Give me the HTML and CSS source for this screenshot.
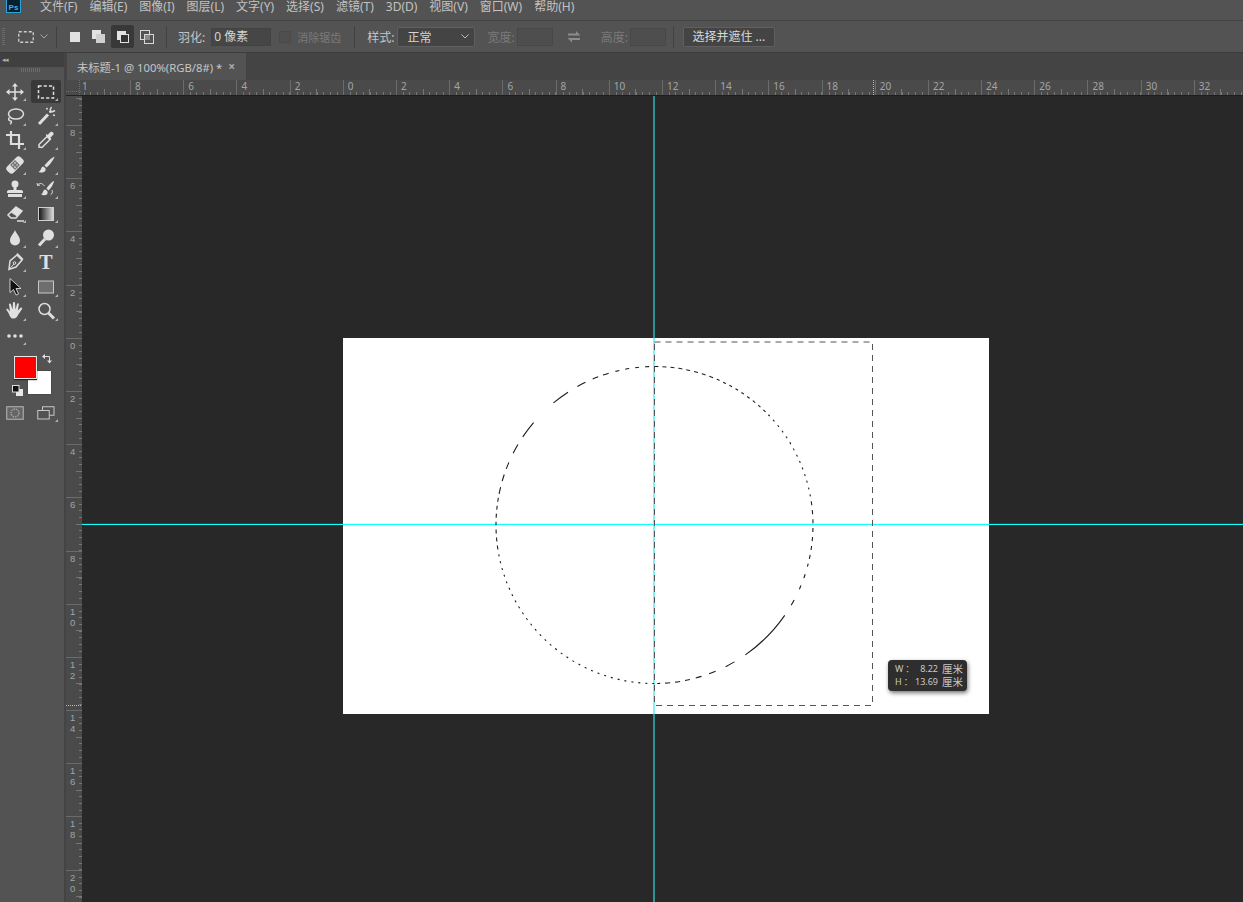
FILE: index.html
```html
<!DOCTYPE html>
<html lang="zh-CN">
<head>
<meta charset="utf-8">
<title>Photoshop</title>
<link rel="stylesheet" href="styles.css">
</head>
<body>
<div class="app">
  <header class="menubar">
    <svg class="ps-logo" viewBox="0 0 15 13" width="15" height="13"><rect x="0.5" y="-2" width="14" height="14.5" fill="#06202f" stroke="#2aa3d8"/><text x="2.6" y="9.6" class="ps-text">Ps</text></svg>
    <nav class="menu">
      <span>文件(F)</span><span>编辑(E)</span><span>图像(I)</span><span>图层(L)</span><span>文字(Y)</span><span>选择(S)</span><span>滤镜(T)</span><span>3D(D)</span><span>视图(V)</span><span>窗口(W)</span><span>帮助(H)</span>
    </nav>
  </header>

  <section class="options">
    <span class="grip"></span>
    <svg class="opt-tool" viewBox="0 0 16 12" width="16" height="12"><rect x="0.75" y="0.75" width="14.5" height="10.5" fill="none" stroke="#cfcfcf" stroke-width="1.3" stroke-dasharray="3 2"/></svg>
    <svg class="opt-chevron" viewBox="0 0 8 5" width="8" height="5"><path d="M.5.5 4 4 7.500.5" fill="none" stroke="#a8a8a8"/></svg>
    <span class="sep sep-a"></span>
    <button class="mode mode-first"><svg viewBox="0 0 14 14" width="14" height="14"><rect x="2" y="2" width="10" height="10" fill="#e2e2e2"/></svg></button>
    <button class="mode"><svg viewBox="0 0 14 14" width="14" height="14"><rect x="0" y="0" width="9" height="9" fill="#e2e2e2"/><rect x="4" y="4" width="9" height="9" fill="#cfcfcf"/></svg></button>
    <button class="mode mode-on"><svg viewBox="0 0 14 14" width="14" height="14"><rect x="1" y="1" width="9" height="9" fill="#e2e2e2"/><rect x="4.500" y="4.500" width="8" height="8" fill="#333" stroke="#e2e2e2"/></svg></button>
    <button class="mode"><svg viewBox="0 0 14 14" width="14" height="14"><rect x="0.500" y="0.500" width="9" height="9" fill="none" stroke="#d8d8d8"/><rect x="4" y="4" width="6" height="6" fill="#8b8b8b"/><rect x="4.500" y="4.500" width="9" height="9" fill="none" stroke="#d8d8d8"/></svg></button>
    <span class="sep sep-b"></span>
    <label class="opt-label feather-label">羽化:</label>
    <span class="field feather">0 像素</span>
    <span class="check"></span>
    <span class="opt-label dim antialias">消除锯齿</span>
    <span class="sep sep-c"></span>
    <label class="opt-label style-label">样式:</label>
    <span class="select">正常<svg viewBox="0 0 8 5" width="8" height="5"><path d="M.5.5 4 4 7.500.5" fill="none" stroke="#b8b8b8"/></svg></span>
    <span class="opt-label dim width-label">宽度:</span>
    <span class="field small"></span>
    <svg class="swap" viewBox="0 0 14 12" width="14" height="12"><path d="M1 2.500h8V0l4.500 4.500H1zM13 7H.500L5 11.500V9h8z" fill="#8c8c8c"/></svg>
    <span class="opt-label dim height-label">高度:</span>
    <span class="field small"></span>
    <span class="sep sep-d"></span>
    <button class="refine">选择并遮住 ...</button>
  </section>

  <div class="workspace">
    <aside class="toolbar">
      <div class="toolbar-head">◂◂</div>
      <div class="toolbar-grip"></div>
      <div class="tools">
        <span class="tool"><svg viewBox="0 0 20 20"><path d="M10 3v14M3 10h14" class="s"/><path d="M10 1l3 3.500H7zM10 19l3-3.500H7zM1 10l3.500-3v6zM19 10l-3.500-3v6z" class="f"/></svg></span>
        <span class="tool active"><svg viewBox="0 0 20 20"><rect x="2.500" y="4" width="15" height="12" class="s" stroke-dasharray="3.200 2"/></svg></span>

        <span class="tool"><svg viewBox="0 0 20 20"><ellipse cx="11" cy="8" rx="7.500" ry="5" class="s"/><path d="M4.500 11.500C3 13 3.500 15 6 15c1 1.200 0 2.500-1 3" class="s"/></svg></span>
        <span class="tool"><svg viewBox="0 0 20 20"><path d="M3 18 12 8.500" class="s thick"/><path d="M14 4l1.500-3M16 6l3-1.500M11.500 3.500 10.500 2M17 9l2 .5" class="s"/><circle cx="14.500" cy="5.500" r="1.500" class="f"/></svg></span>

        <span class="tool"><svg viewBox="0 0 20 20"><path d="M6 1v13h13M1 5h13v14" class="s thick2"/></svg></span>
        <span class="tool"><svg viewBox="0 0 20 20"><path d="M3 17l0-2.500 8-8 3 3-8 8z" class="s"/><path d="M10 5.500l4.500 4.500 1-1-1.200-1.200 3-3c1.200-1.500-1.300-4-2.800-2.800l-3 3L10.300 3.800z" class="f"/></svg></span>

        <span class="tool"><svg viewBox="0 0 20 20"><g transform="rotate(-45 10 10)"><rect x="0.500" y="5.500" width="19" height="9" rx="3" class="f"/><rect x="6.500" y="6.500" width="7" height="7" fill="#777"/><circle cx="8.500" cy="8.500" r=".8" class="f"/><circle cx="11.500" cy="8.500" r=".8" class="f"/><circle cx="8.500" cy="11.500" r=".8" class="f"/><circle cx="11.500" cy="11.500" r=".8" class="f"/></g></svg></span>
        <span class="tool"><svg viewBox="0 0 20 20"><path d="M18.500 1.500c-2 .5-8 6-10 9l2 2c3-2 8-9 8-11zM7.500 11.500c-3 .5-2 4-5 5.500 3.500 1.500 8 .2 7-3.500z" class="f"/></svg></span>

        <span class="tool"><svg viewBox="0 0 20 20"><circle cx="10" cy="5" r="3.500" class="f"/><path d="M8.500 7h3v4.500h-3zM2 12.500C2 11 4 11 5 11h10c1 0 3 0 3 1.500V14H2z" class="f"/><path d="M3 16.500h14" class="s thick"/></svg></span>
        <span class="tool"><svg viewBox="0 0 20 20"><path d="M18 2c-2 .5-6 5-7.500 7.500l2 2C15 9.500 18 4 18 2zM9.500 10.500c-3 .5-2 3.500-4.500 5 3 1.500 7.500 1 6.500-3z" class="f"/><path d="M1.500 6c2-2 4.500-2 6 0l1 1M1 4l.5 2.500L4 6M16 11c1 2 0 4-1.500 5" class="s thin"/></svg></span>

        <span class="tool"><svg viewBox="0 0 20 20"><path d="M11 3l6 4-6 7H6L3 11z" class="s"/><path d="M11 3l6 4-5 5.500L6 8.500z" class="f"/><path d="M12 17h7" class="s"/></svg></span>
        <span class="tool"><svg viewBox="0 0 20 20"><defs><linearGradient id="grad"><stop offset="0" stop-color="#111"/><stop offset="1" stop-color="#ddd"/></linearGradient></defs><rect x="2.500" y="3.500" width="15" height="13" fill="url(#grad)" stroke="#cfcfcf"/></svg></span>

        <span class="tool"><svg viewBox="0 0 20 20"><path d="M10 2c1.500 4 5 6.500 5 10.500a5 5 0 0 1-10 0C5 8.500 8.500 6 10 2z" class="f"/></svg></span>
        <span class="tool"><svg viewBox="0 0 20 20"><circle cx="12.500" cy="7" r="5.500" class="f"/><path d="M9 11 3 17.500" class="s thick"/></svg></span>

        <span class="tool"><svg viewBox="0 0 20 20"><path d="M4 17.500 5 9 12 3l5 5-6 7z" class="s"/><path d="M4 17.500 9 12" class="s thin"/><circle cx="9.500" cy="11" r="1.300" class="s thin"/><path d="M12 1.500l6 6" class="s"/></svg></span>
        <span class="tool glyph">T</span>

        <span class="tool"><svg viewBox="0 0 20 20"><path d="M5 1.500v14l3.500-3 2.500 5.500 2.500-1-2.500-5.500H16z" fill="#111" stroke="#ddd" stroke-width=".9"/></svg></span>
        <span class="tool"><svg viewBox="0 0 20 20"><rect x="2.500" y="4" width="15" height="12" fill="#6e6e6e" stroke="#c8c8c8"/></svg></span>

        <span class="tool"><svg viewBox="0 0 20 20"><path d="M3.500 12 1.500 9c-.5-1.200 1-1.800 1.700-.8L5 10.500 4 3.500c0-1.300 1.800-1.300 2 0L7.500 8.500 8 2c0-1.300 2-1.300 2 0l.5 6.500L12 3c.4-1.200 2-1 1.800.4L12.800 9.500l2.700-2.700c1-.9 2.300.2 1.500 1.300l-4 6c-1 2-2 3.400-4.500 3.400-3 0-3.500-2-5-5.500z" class="f"/></svg></span>
        <span class="tool"><svg viewBox="0 0 20 20"><circle cx="8.500" cy="8" r="5.500" class="s"/><path d="M12.500 12 18 17.500" class="s thick"/></svg></span>

        <span class="tool"><svg viewBox="0 0 20 20"><circle cx="4" cy="10" r="1.800" class="f"/><circle cx="10" cy="10" r="1.800" class="f"/><circle cx="16" cy="10" r="1.800" class="f"/></svg></span>
      </div>

      <div class="colors">
        <span class="swatch bg"></span>
        <span class="swatch fg"></span>
        <svg class="swap-colors" viewBox="0 0 11 11" width="11" height="11"><path d="M1 3.500h6.500v5" fill="none" stroke="#ddd"/><path d="M0 3.500 3 1v5zM5 7.500h5l-2.500 3z" fill="#ddd"/></svg>
        <svg class="default-colors" viewBox="0 0 11 11" width="11" height="11"><rect x="4" y="4" width="7" height="7" fill="#e8e8e8"/><rect x=".5" y=".5" width="6.500" height="6.500" fill="#111" stroke="#ddd"/></svg>
      </div>

      <div class="mask-row">
        <span class="tool bare"><svg viewBox="0 0 18 14"><rect x=".75" y=".75" width="16.500" height="12.500" fill="#666" stroke="#b8b8b8"/><circle cx="9" cy="7" r="4" fill="none" stroke="#d0d0d0" stroke-dasharray="1.400 1"/></svg></span>
        <span class="tool bare"><svg viewBox="0 0 18 14"><rect x="5.500" y=".75" width="11.500" height="8.500" fill="#535353" stroke="#c8c8c8"/><rect x=".75" y="4.500" width="11.500" height="8.500" fill="#535353" stroke="#c8c8c8"/></svg></span>
      </div>
    </aside>

    <div class="docarea">
      <div class="tabstrip">
        <div class="tab"><span>未标题-1 @ 100%(RGB/8#) *</span><span class="tab-close">×</span></div>
      </div>
      <div class="editor">
        <div class="corner"></div>
        <div class="ruler-h">
          <div class="track-h">
            <span class="mark-h">1</span><span class="mark-h">8</span><span class="mark-h">6</span><span class="mark-h">4</span><span class="mark-h">2</span><span class="mark-h">0</span><span class="mark-h">2</span><span class="mark-h">4</span><span class="mark-h">6</span><span class="mark-h">8</span><span class="mark-h">10</span><span class="mark-h">12</span><span class="mark-h">14</span><span class="mark-h">16</span><span class="mark-h">18</span><span class="mark-h">20</span><span class="mark-h">22</span><span class="mark-h">24</span><span class="mark-h">26</span><span class="mark-h">28</span><span class="mark-h">30</span><span class="mark-h">32</span>
          </div>
          <span class="pointer-h"></span>
        </div>
        <div class="ruler-v">
          <div class="track-v">
            <span class="mark-v"></span><span class="mark-v">8</span><span class="mark-v">6</span><span class="mark-v">4</span><span class="mark-v">2</span><span class="mark-v">0</span><span class="mark-v">2</span><span class="mark-v">4</span><span class="mark-v">6</span><span class="mark-v">8</span><span class="mark-v">1<br>0</span><span class="mark-v">1<br>2</span><span class="mark-v">1<br>4</span><span class="mark-v">1<br>6</span><span class="mark-v">1<br>8</span><span class="mark-v">2<br>0</span>
          </div>
          <span class="pointer-v"></span>
        </div>
        <div class="canvas">
          <div class="document"></div>
          <div class="guide guide-v"></div>
          <div class="guide guide-h"></div>
          <svg class="selection" viewBox="0 0 646 376" width="646" height="376">
            <rect x="311.500" y="4" width="218" height="363.500" fill="none" stroke="#555" stroke-dasharray="6 5"/>
            <circle cx="311.500" cy="187" r="158.500" fill="none" stroke="#1c1c1c" stroke-width="1.100" transform="rotate(-90 311.500 187)" stroke-dasharray="4 4 4 4 4 4 4 4 4 4 4 4 4 4 4 4 3 4 3 4 3 4 3 4 3 4 3 4 3 4 3 4 3 4 2 5 2 5 2 5 2 5 2 5 2 5 2 5 2 5 2 5 2 5 2 5 2 5 2 5 2 5 4 5 4 5 4 5 4 5 4 5 4 5 4 5 3 8 4 8 4 12 6 12 56 13 10 11 7 8 6 6 5 5 5 5 5 5 3 3 2 5 2 5 2 5 2 5 2 5 2 5 2 5 2 5 2 5 2 5 2 5 2 5 2 5 2 5 2 5 2 5 2 5 2 5 2 5 2 5 2 5 2 5 2 5 2 5 2 5 2 5 2 5 2 5 2 5 2 5 2 5 2 5 4 4 4 4 4 4 4 4 4 4 4 4 4 4 7 6 7 6 7 10 10 9 18 28 18 11 9 8 6 5 6 7 4 6 4 6 4 6 4 6"/>
          </svg>
          <div class="readout">
            <span class="axis">W：</span><span class="num">8.22</span><span class="unit">厘米</span>
            <span class="axis">H：</span><span class="num">13.69</span><span class="unit">厘米</span>
          </div>
        </div>
      </div>
    </div>
  </div>
</div>
</body>
</html>
```

FILE: styles.css
```css
* { box-sizing: border-box; }
html, body { margin: 0; height: 100%; overflow: hidden; background: #282828; }
body { font-family: "Noto Sans", "Noto Sans CJK SC", "Liberation Sans", sans-serif; font-size: 12px; color: #c8c8c8; }
.app { display: flex; flex-direction: column; width: 1243px; height: 902px; }

/* menu */
.menubar { display: flex; align-items: flex-start; flex: none; height: 21px; background: #535353; border-bottom: 1px solid #444; }
.ps-logo { margin-left: 6px; flex: none; }
.ps-text { font: bold 8px "Liberation Sans", sans-serif; fill: #3bb4e8; }
.menu { display: flex; gap: 12px; margin-left: 19px; line-height: 13px; padding-top: 0; color: #c2c2c2; white-space: nowrap; }

/* options */
.options { display: flex; align-items: center; flex: none; height: 32px; background: #535353; border-bottom: 1px solid #3c3c3c; white-space: nowrap; }
.grip { width: 3px; height: 18px; margin-left: 2px; background: repeating-linear-gradient(#6a6a6a 0 1px, transparent 1px 2px); }
.opt-tool { margin-left: 13px; }
.opt-chevron { margin-left: 6px; }
.sep { width: 1px; height: 22px; background: #414141; flex: none; }
.sep-a { margin-left: 8px; }
.sep-b { margin-left: 8px; }
.sep-c { margin-left: 13px; }
.sep-d { margin-left: 7px; }
.mode { display: flex; align-items: center; justify-content: center; width: 23px; height: 23px; margin-left: 1px; padding: 0; border: 0; border-radius: 2px; background: none; }
.mode-first { margin-left: 6px; }
.mode-on { background: #383838; }
.opt-label { color: #c6c6c6; }
.dim { color: #7a7a7a; }
.feather-label { margin-left: 11px; }
.field { display: block; height: 18px; line-height: 16px; background: #464646; border: 1px solid #424242; padding-left: 2px; color: #d4d4d4; }
.feather { width: 60px; margin-left: 6px; }
.check { width: 12px; height: 12px; margin-left: 8px; border: 1px solid #494949; background: #4f4f4f; border-radius: 1px; }
.antialias { margin-left: 6px; font-size: 11px; }
.style-label { margin-left: 12px; }
.select { display: flex; align-items: center; justify-content: space-between; width: 78px; height: 20px; margin-left: 3px; padding: 0 5px 0 9px; background: #444; border: 1px solid #5f5f5f; border-radius: 2px; color: #d4d4d4; }
.width-label { margin-left: 12px; }
.small { width: 36px; margin-left: 2px; background: #4e4e4e; border-color: #484848; }
.swap { margin-left: 14px; }
.height-label { margin-left: 20px; }
.refine { width: 92px; height: 20px; margin-left: 9px; padding: 0; border: 1px solid #5f5f5f; border-radius: 2px; background: #444; color: #dadada; font: inherit; line-height: 16px; }

/* layout below options */
.workspace { display: flex; flex: 1; min-height: 0; }

/* toolbar */
.toolbar { flex: none; width: 66px; background: #535353; border-right: 2px solid #444; }
.toolbar-head { height: 14px; background: #404040; color: #b0b0b0; font-size: 7px; line-height: 13px; padding-left: 2px; letter-spacing: -1px; }
.toolbar-grip { width: 20px; height: 4px; margin: 1px 0 7px 21px; background: repeating-linear-gradient(90deg, #6a6a6a 0 1px, transparent 1px 2px); }
.tools { display: grid; grid-template-columns: 30px 32px; grid-auto-rows: 24.4px; }
.tool { position: relative; display: flex; align-items: center; justify-content: center; margin: 1px 1px 0; border-radius: 2px; }
.tool svg { width: 20px; height: 20px; }
.tool::after { content: ""; position: absolute; right: 3px; bottom: 2px; border-style: solid; border-width: 0 0 3px 3px; border-color: transparent transparent #b4b4b4 transparent; }
.tool.active { background: #393939; }
.glyph { font: bold 20px "Liberation Serif", serif; color: #e0e0e0; }
.glyph::after, .tool.bare:first-child::after { display: none; }
.s { fill: none; stroke: #dedede; stroke-width: 1.500; }
.thick { stroke-width: 3; }
.thick2 { stroke-width: 2.200; }
.thin { stroke-width: 1; }
.f { fill: #e0e0e0; }

.colors { position: relative; height: 44px; margin-top: 9px; }
.swatch { position: absolute; display: block; }
.fg { left: 14px; top: 0; width: 23px; height: 23px; background: #f00; border: 1px solid #e6e6e6; box-shadow: 0 1px 1px #222; }
.bg { left: 28px; top: 15px; width: 23px; height: 23px; background: #fff; box-shadow: 0 0 1px #222; }
.swap-colors { position: absolute; left: 42px; top: -3px; }
.default-colors { position: absolute; left: 12px; top: 29px; }
.mask-row { display: grid; grid-template-columns: 30px 32px; height: 24px; margin-top: 0; }
.mask-row svg { width: 18px; height: 14px; }

/* document area */
.docarea { flex: 1; min-width: 0; display: flex; flex-direction: column; }
.tabstrip { flex: none; height: 27px; background: #444; }
.tab { display: flex; align-items: center; width: 179px; height: 27px; margin-left: 1px; padding-left: 10px; background: #535353; font-size: 11.300px; color: #c6c6c6; white-space: nowrap; }
.tab-close { margin-left: 6px; font-size: 12px; font-weight: bold; color: #aaa; }

.editor { flex: 1; min-height: 0; display: grid; grid-template-columns: 16px 1fr; grid-template-rows: 16px 1fr; }
.corner { background: #4a4a4a; border-bottom: 1px solid #222; background-image: repeating-linear-gradient(90deg, #6c6c6c 0 1px, transparent 1px 2px), repeating-linear-gradient(#6c6c6c 0 1px, transparent 1px 2px); background-size: 100% 1px, 1px 100%; background-position: 0 11px, 13px 0; background-repeat: no-repeat; }

.ruler-h { position: relative; overflow: hidden; background: #4a4a4a; border-bottom: 1px solid #1e1e1e; }
.track-h { display: flex; height: 15px; margin-left: -5.100px; }
.mark-h { flex: none; width: 53.200px; height: 15px; padding-left: 4px; border-left: 1px solid #6b6b6b; font-size: 10px; line-height: 12px; color: #a2a5a8;
  background-image: linear-gradient(#757575, #757575), repeating-linear-gradient(90deg, transparent 0 5.650px, #757575 5.650px 6.650px);
  background-size: 1px 6px, 100% 3px; background-position: 25.600px 100%, 0 100%; background-repeat: no-repeat; }
.pointer-h { position: absolute; left: 791px; top: 0; width: 1px; height: 15px; background: repeating-linear-gradient(#bbb 0 1px, transparent 1px 2px); }

.ruler-v { position: relative; overflow: hidden; background: #4a4a4a; }
.track-v { display: flex; flex-direction: column; margin-top: -24.200px; }
.mark-v { flex: none; display: block; width: 16px; height: 53.200px; padding: 1px 0 0 4px; border-top: 1px solid #6b6b6b; font-family: "Liberation Sans", sans-serif; font-size: 9.500px; line-height: 11px; color: #a2a5a8;
  background-image: linear-gradient(#757575, #757575), repeating-linear-gradient(transparent 0 5.650px, #757575 5.650px 6.650px);
  background-size: 6px 1px, 3px 100%; background-position: 100% 25.600px, 100% 0; background-repeat: no-repeat; }
.pointer-v { position: absolute; left: 0; top: 609px; width: 16px; height: 1px; background: repeating-linear-gradient(90deg, #bbb 0 1px, transparent 1px 2px); }

.canvas { position: relative; overflow: hidden; background: #282828; }
.document { position: absolute; left: 261px; top: 242px; width: 646px; height: 376px; background: #fff; }
.guide { position: absolute; }
.guide-v { left: 571px; top: 0; bottom: 0; width: 2px; background: rgba(50, 225, 235, .58); }
.guide-h { left: 0; right: 0; top: 427px; height: 2px; background: linear-gradient(rgba(0, 255, 255, .15) 50%, #10ffff 50%); }
.selection { position: absolute; left: 261px; top: 242px; }
.readout { position: absolute; left: 806px; top: 564px; display: grid; grid-template-columns: 14px 29px auto; align-items: center; width: 79px; height: 31px; padding: 3px 7px; border-radius: 4px; background: #2e2e2e; box-shadow: 1px 2px 4px rgba(0, 0, 0, .55); font-size: 9px; line-height: 12px; color: #c9c9c9; white-space: nowrap; }
.axis { letter-spacing: 2px; }
.num { text-align: right; }
.unit { margin-left: 4px; font-size: 10.500px; }
```
